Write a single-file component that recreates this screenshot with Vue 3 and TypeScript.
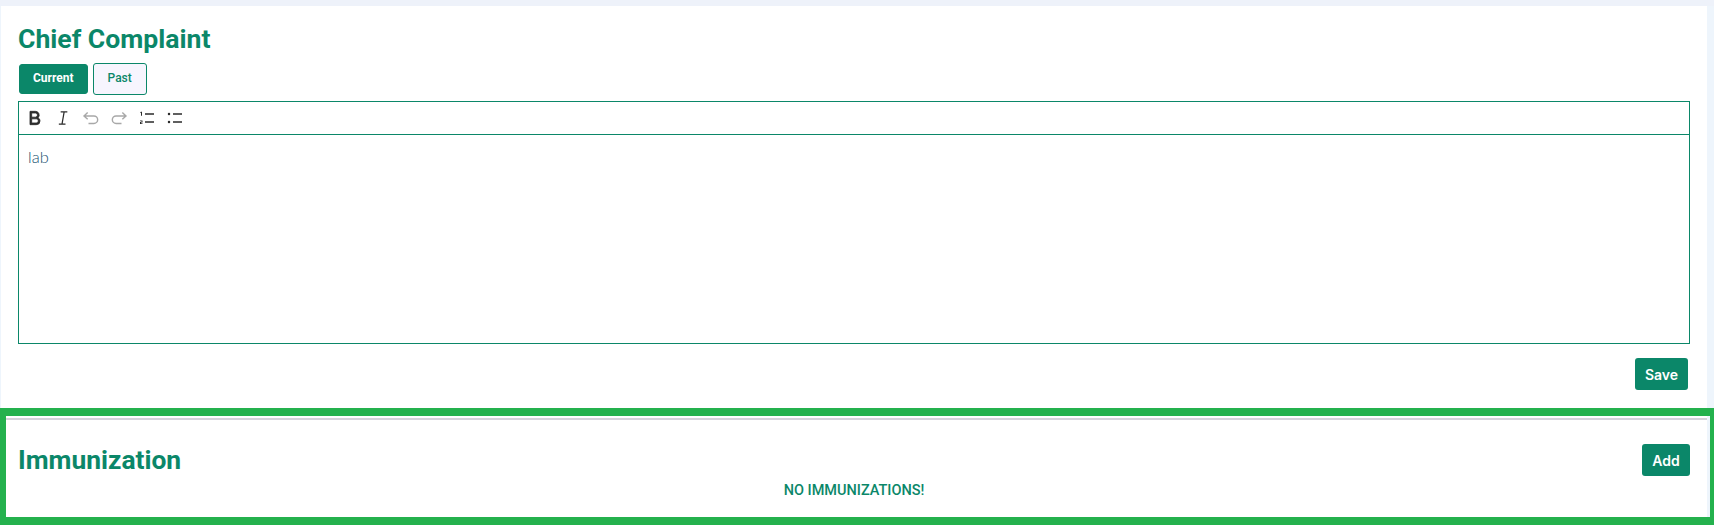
<script setup lang="ts">
import { ref } from 'vue'

const note = ref('lab')
const activeTab = ref('Current')
const tabs = ['Current', 'Past']
</script>

<template>
  <div class="page">
    <section class="card">
      <h2 class="title">Chief Complaint</h2>
      <div class="tabs">
        <button
          v-for="tab in tabs"
          :key="tab"
          class="tab"
          :class="{ active: activeTab === tab }"
          @click="activeTab = tab"
        >
          {{ tab }}
        </button>
      </div>
      <div class="editor">
        <div class="toolbar">
          <svg class="icon bold" viewBox="0 0 24 24"><path d="M8 11h4.500a2.500 2.500 0 1 0 0-5H8v5zm10 4.500a4.500 4.500 0 0 1-4.500 4.500H6V4h6.500a4.500 4.500 0 0 1 3.256 7.606A4.498 4.498 0 0 1 18 15.500zM8 13v5h5.500a2.500 2.500 0 1 0 0-5H8z" /></svg>
          <svg class="icon" viewBox="0 0 24 24"><path d="M15 20H7v-1.500h3.200l2.300-13H9.200V4h8v1.500h-3.200l-2.300 13H15z" /></svg>
          <svg class="icon line" viewBox="0 0 24 24"><path d="M8 5.400L3.600 9.500 8 13.600M3.600 9.500H15.500a4.500 4.500 0 0 1 0 9H9" /></svg>
          <svg class="icon line" viewBox="0 0 24 24"><path d="M16 5.400l4.400 4.100L16 13.600M20.400 9.500H8.500a4.500 4.500 0 0 0 0 9H15" /></svg>
          <svg class="icon" viewBox="0 0 24 24"><path d="M9.600 6.300h10.800v1.800H9.600zm0 9.600h10.800v1.800H9.600zM4.800 4.600H6v4.600H4.800V5.800H3.800V5.200zM3.600 15h3v2.400H4.800v.8h1.800v1H3.600v-2.300h1.800v-.9H3.600z" /></svg>
          <svg class="icon" viewBox="0 0 24 24"><path d="M9.600 6.300h10.800v1.800H9.600zm0 9.600h10.800v1.800H9.600zM4.800 5.700a1.500 1.500 0 1 1 0 3 1.500 1.500 0 0 1 0-3zm0 9.600a1.500 1.500 0 1 1 0 3 1.500 1.500 0 0 1 0-3z" /></svg>
        </div>
        <div class="content">{{ note }}</div>
      </div>
      <div class="actions">
        <button class="solid save">Save</button>
      </div>
    </section>

    <section class="immunization">
      <div class="inner">
        <hr class="rule" />
        <div class="head">
          <h2 class="title">Immunization</h2>
          <button class="solid add">Add</button>
        </div>
        <p class="empty">NO IMMUNIZATIONS!</p>
      </div>
    </section>
  </div>
</template>

<style>
html,
body {
  margin: 0;
  background: #eef5fc;
}
</style>

<style scoped>
.page {
  width: 1714px;
  height: 525px;
  box-sizing: border-box;
  border-top: 6px solid #eef2fa;
  overflow: hidden;
  display: flex;
  flex-direction: column;
  background: #eef5fc;
  font-family: Roboto, "Liberation Sans", sans-serif;
}

.card {
  height: 402px;
  box-sizing: border-box;
  margin: 0 7px 0 1px;
  padding: 18px 17px 0 17px;
  background: #fff;
}

.title {
  margin: 0;
  font-size: 26.6px;
  font-weight: 700;
  line-height: 30px;
  color: #0b8769;
}

.tabs {
  display: flex;
  align-items: center;
  gap: 5px;
  margin: 8px 0 6px 1px;
  height: 33px;
}

.tab {
  height: 32px;
  padding: 0 14px 2px;
  border: 1px solid #0b8769;
  border-radius: 3px;
  background: #f7f5fe;
  color: #0b8769;
  font-family: Roboto, sans-serif;
  font-size: 12px;
  font-weight: 500;
}

.tab.active {
  height: 30px;
  padding: 0 13px 2px;
  background: #0b8769;
  color: #fff;
  font-weight: 700;
}

.editor {
  height: 243px;
  box-sizing: border-box;
  border: 1px solid #0b8769;
}

.toolbar {
  height: 33px;
  box-sizing: border-box;
  display: flex;
  align-items: center;
  gap: 8px;
  padding: 0 0 0 6px;
  border-bottom: 1px solid #0b8769;
}

.icon {
  width: 20px;
  height: 20px;
  fill: #2b2b2b;
}

.icon.bold path {
  stroke: #2b2b2b;
  stroke-width: 1;
}

.icon.line {
  fill: none;
  stroke: #a8a8a8;
  stroke-width: 1.7;
}

.content {
  padding: 12px 9px;
  font-family: Lato, sans-serif;
  font-size: 16.500px;
  font-weight: 300;
  color: #17506f;
}

.actions {
  display: flex;
  justify-content: flex-end;
  margin-top: 14px;
}

.solid {
  height: 32px;
  border: none;
  border-radius: 3px;
  background: #0b8769;
  color: #fff;
  font-family: Inter, sans-serif;
  font-size: 14px;
  font-weight: 600;
}

.save {
  width: 53px;
  margin-right: 2px;
}

.add {
  width: 48px;
}

.immunization {
  flex: 1;
  box-sizing: border-box;
  border: solid #24b14d;
  border-width: 8px 4px 8px 6px;
  padding-right: 3px;
  background: #eef5fc;
}

.inner {
  height: 100%;
  background: #fff;
  padding-top: 2px;
  box-sizing: border-box;
}

.rule {
  height: 2px;
  margin: 0;
  border: none;
  background: #d5d3da;
}

.head {
  display: flex;
  align-items: center;
  justify-content: space-between;
  height: 32px;
  padding: 24px 17px 0 12px;
}

.head .title {
  font-size: 26.4px;
}

.empty {
  margin: 0;
  padding: 6px 5px 0 0;
  text-align: center;
  font-size: 14.500px;
  font-weight: 500;
  color: #0b8769;
}
</style>
